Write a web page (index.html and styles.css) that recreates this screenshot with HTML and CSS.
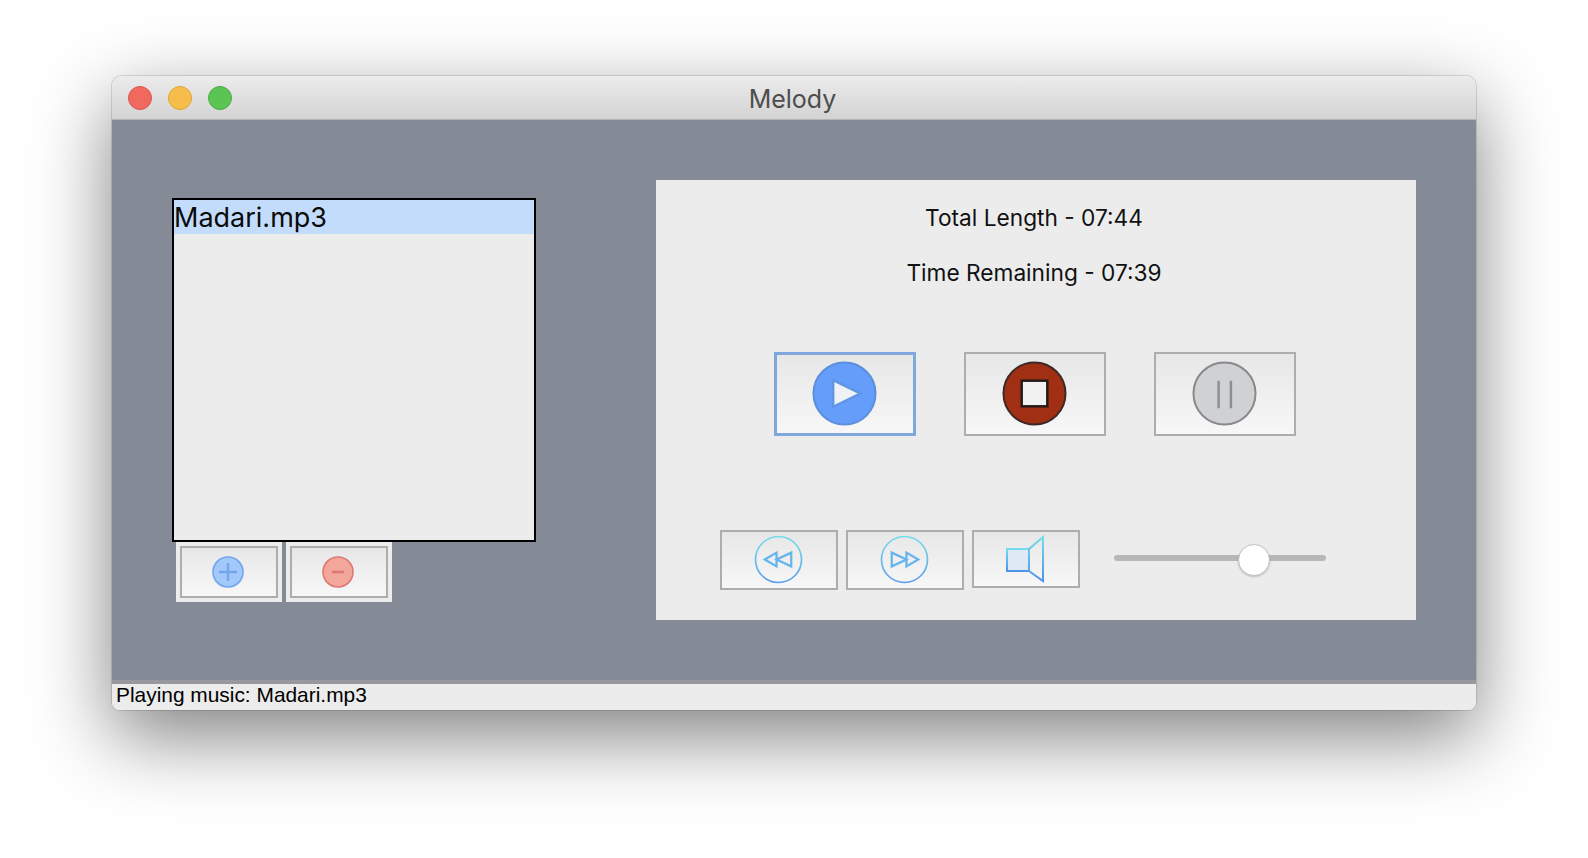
FILE: index.html
```html
<!DOCTYPE html>
<html lang="en">
<head>
<meta charset="utf-8">
<title>Melody</title>
<link rel="stylesheet" href="styles.css">
</head>
<body>
<main class="window">
  <header class="titlebar">
    <div class="lights">
      <span class="light red"></span>
      <span class="light yellow"></span>
      <span class="light green"></span>
    </div>
    <h1 class="title">Melody</h1>
  </header>
  <div class="content">
    <section class="playlist">
      <ul class="list">
        <li class="list-item">Madari.mp3</li>
      </ul>
      <div class="list-actions">
        <div class="action-wrap">
          <button class="btn action" aria-label="Add">
            <svg width="32" height="32" viewBox="0 0 32 32"><circle cx="16" cy="16" r="15" fill="#a3c8fb" stroke="#6fa5ea" stroke-width="1.6"/><path d="M16 7v18M7 16h18" stroke="#72a6ea" stroke-width="2.4"/></svg>
          </button>
        </div>
        <div class="action-wrap">
          <button class="btn action" aria-label="Remove">
            <svg width="32" height="32" viewBox="0 0 32 32"><circle cx="16" cy="16" r="15" fill="#f3a79c" stroke="#dc7870" stroke-width="1.6"/><path d="M10 16h12" stroke="#dc7870" stroke-width="2.6"/></svg>
          </button>
        </div>
      </div>
    </section>
    <section class="player">
      <p class="info info-total">Total Length - 07:44</p>
      <p class="info info-remaining">Time Remaining - 07:39</p>
      <div class="main-controls">
        <button class="btn main focused" aria-label="Play">
          <svg width="65" height="65" viewBox="0 0 66 66"><circle cx="33" cy="33" r="31.5" fill="#659dfa" stroke="#5b8fdc" stroke-width="2"/><path d="M21.500 19.500 L49 33 L21.500 46.500Z" fill="#eef1f5" stroke="#5e95e4" stroke-width="2.500"/></svg>
        </button>
        <button class="btn main" aria-label="Stop">
          <svg width="65" height="65" viewBox="0 0 66 66"><circle cx="33" cy="33" r="31.500" fill="#a02f14" stroke="#3d2a26" stroke-width="2"/><rect x="20" y="20" width="26" height="26" fill="#f1f1f1" stroke="#241a18" stroke-width="2.500"/></svg>
        </button>
        <button class="btn main" aria-label="Pause">
          <svg width="65" height="65" viewBox="0 0 66 66"><circle cx="33" cy="33" r="31.500" fill="#d0d1d3" stroke="#88898c" stroke-width="2"/><path d="M27 20v28M39.500 20v28" stroke="#8d8e90" stroke-width="2.500"/></svg>
        </button>
      </div>
      <div class="secondary-controls">
        <button class="btn small" aria-label="Rewind">
          <svg width="49" height="49" viewBox="0 0 50 50"><defs><linearGradient id="g1" x1="0" y1="0" x2="0" y2="1"><stop offset="0" stop-color="#74dcec"/><stop offset="1" stop-color="#5b9dec"/></linearGradient></defs><circle cx="25" cy="25" r="23.500" fill="none" stroke="url(#g1)" stroke-width="1.700"/><path d="M11 25l12-7v14zM38 18v14l-15-7z" fill="none" stroke="#66b4ec" stroke-width="2.300"/></svg>
        </button>
        <button class="btn small" aria-label="Fast forward">
          <svg width="49" height="49" viewBox="0 0 50 50"><defs><linearGradient id="g2" x1="0" y1="0" x2="0" y2="1"><stop offset="0" stop-color="#74dcec"/><stop offset="1" stop-color="#5b9dec"/></linearGradient></defs><circle cx="25" cy="25" r="23.500" fill="none" stroke="url(#g2)" stroke-width="1.700"/><path d="M12 18v14l15-7zM27 18v14l12-7z" fill="none" stroke="#66b4ec" stroke-width="2.300"/></svg>
        </button>
        <button class="btn volume" aria-label="Volume">
          <svg width="40" height="48" viewBox="0 0 40 48"><defs><linearGradient id="g3" x1="0" y1="0" x2="0" y2="1"><stop offset="0" stop-color="#74dcec"/><stop offset="1" stop-color="#4f93ea"/></linearGradient></defs><rect x="1" y="14" width="22" height="22" fill="#dfe9f3" stroke="url(#g3)" stroke-width="2"/><path d="M23 14L37 2V46L23 36Z" fill="none" stroke="url(#g3)" stroke-width="2"/></svg>
        </button>
        <div class="slider"><span class="thumb"></span></div>
      </div>
    </section>
  </div>
  <footer class="status">Playing music: Madari.mp3</footer>
</main>
</body>
</html>
```
FILE: styles.css
```css
* { box-sizing: border-box; }
html, body { margin: 0; height: 100%; background: #fff; overflow: hidden; }
body { padding: 76px 0 0 112px; }

.window {
  width: 1364px;
  height: 634px;
  display: flex;
  flex-direction: column;
  border-radius: 10px 10px 8px 8px;
  overflow: hidden;
  box-shadow: 0 0 0 1px rgba(0,0,0,.12), 0 26px 78px rgba(0,0,0,.5);
}
.titlebar {
  height: 44px;
  flex: none;
  display: flex;
  align-items: center;
  justify-content: center;
  position: relative;
  background: linear-gradient(#ececec, #d3d3d3);
  border-bottom: 1px solid #b4b4b6;
}
.lights { position: absolute; left: 16px; top: 10px; display: flex; gap: 16px; }
.light { width: 24px; height: 24px; border-radius: 50%; border: 1px solid; }
.red { background: #f1685e; border-color: #d9564d; }
.yellow { background: #f7bd4a; border-color: #dea43a; }
.green { background: #5bc553; border-color: #4cab45; }
.title {
  margin: 4px 3px 0 0;
  font: 400 25px/1 "Inter", sans-serif;
  color: #4d4d4d;
}

.content {
  flex: 1;
  display: flex;
  align-items: flex-start;
  background: #858b96;
  padding: 60px 60px 0 60px;
}
.playlist { width: 364px; margin-top: 18px; }
.list {
  list-style: none;
  margin: 0;
  padding: 0;
  height: 344px;
  background: #ececec;
  border: 2px solid #000;
}
.list-item {
  height: 34px;
  padding-top: 1px;
  background: #c3dcfb;
  font: 400 27px/34px "Inter", sans-serif;
  color: #0a0a0a;
}
.list-actions { display: flex; gap: 4px; margin-left: 4px; }
.action-wrap { width: 106px; height: 60px; padding: 4px; background: #ececec; }

.btn {
  display: flex;
  align-items: center;
  justify-content: center;
  padding: 0;
  background: linear-gradient(#e7e7e7, #f7f7f7);
  border: 2px solid #adadad;
  flex: none;
}
.btn svg { display: block; }
.action { width: 100%; height: 100%; padding-right: 2px; }

.player {
  width: 760px;
  height: 440px;
  margin-left: 120px;
  background: #ececec;
  display: flex;
  flex-direction: column;
  align-items: center;
}
.info {
  margin: 0;
  padding-right: 4px;
  font: 400 22.7px/28px "Inter", sans-serif;
  color: #111;
  text-align: center;
}
.info-total { margin-top: 24px; }
.info-remaining { margin-top: 27px; }

.main-controls { display: flex; gap: 48px; margin: 65px 0 0 118px; align-self: flex-start; }
.main { width: 142px; height: 84px; padding: 0 2px 1px 0; }
.focused { border: 3px solid #7fa8dc; }

.secondary-controls {
  display: flex;
  align-items: flex-start;
  align-self: stretch;
  margin: 94px 0 0 64px;
  gap: 8px;
}
.small { width: 118px; height: 60px; padding: 0 2px 1px 0; }
.volume { width: 108px; height: 58px; }
.slider {
  width: 212px;
  height: 6px;
  margin: 25px 0 0 26px;
  border-radius: 3px;
  background: #b7b7b7;
  position: relative;
}
.thumb {
  position: absolute;
  left: 124px;
  top: -11px;
  width: 32px;
  height: 32px;
  border-radius: 50%;
  background: #fff;
  border: 1px solid #c4c4c4;
  box-shadow: 0 1px 2px rgba(0,0,0,.2);
}

.status {
  height: 30px;
  flex: none;
  background: #ececec;
  border-top: 4px solid #98999f;
  padding-left: 4px;
  font: 400 20.9px/22px "Liberation Sans", sans-serif;
  color: #000;
}
```
